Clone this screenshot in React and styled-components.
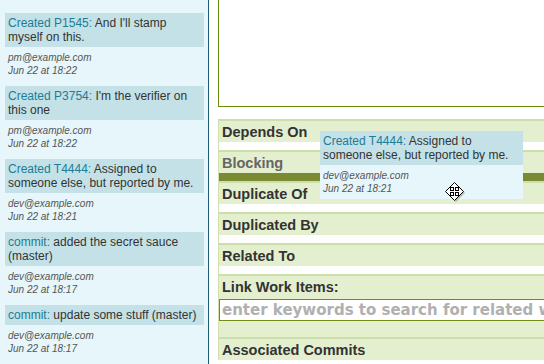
import React from "react";
import styled, { createGlobalStyle } from "styled-components";

const GlobalStyle = createGlobalStyle`
  html, body {
    margin: 0;
    padding: 0;
    background: #ffffff;
  }
  body {
    font-family: "Liberation Sans", Arial, sans-serif;
    color: #333;
  }
`;

const activity = [
  {
    kind: "Created P1545",
    text: "And I'll stamp myself on this.",
    author: "pm@example.com",
    when: "Jun 22 at 18:22",
  },
  {
    kind: "Created P3754",
    text: "I'm the verifier on this one",
    author: "pm@example.com",
    when: "Jun 22 at 18:22",
  },
  {
    kind: "Created T4444",
    text: "Assigned to someone else, but reported by me.",
    author: "dev@example.com",
    when: "Jun 22 at 18:21",
  },
  {
    kind: "commit",
    text: "added the secret sauce (master)",
    author: "dev@example.com",
    when: "Jun 22 at 18:17",
  },
  {
    kind: "commit",
    text: "update some stuff (master)",
    author: "dev@example.com",
    when: "Jun 22 at 18:17",
  },
];

const sections = [
  { title: "Depends On" },
  { title: "Blocking", dim: true, drop: true },
  { title: "Duplicate Of" },
  { title: "Duplicated By" },
  { title: "Related To" },
];

const MoveCursor = () => (
  <CursorBox width="21" height="21" viewBox="0 0 21 21">
    <polygon points="11,2 20,11 11,20 2,11" fill="#9a9a9a" opacity="0.6" />
    <polygon points="9.5,0.5 18.5,9.5 9.5,18.5 0.5,9.5" fill="#fff" stroke="#000" strokeWidth="1" />
    <rect x="5.5" y="5.5" width="3" height="3" fill="#fff" stroke="#000" />
    <rect x="10.5" y="5.5" width="3" height="3" fill="#fff" stroke="#000" />
    <rect x="5.5" y="10.5" width="3" height="3" fill="#fff" stroke="#000" />
    <rect x="10.5" y="10.5" width="3" height="3" fill="#fff" stroke="#000" />
  </CursorBox>
);

const ActivityItem = ({ item, ghost }) => (
  <Item $ghost={ghost}>
    <Summary>
      <Kind>{item.kind}:</Kind> {item.text}
    </Summary>
    <Meta $ghost={ghost}>
      <div>{item.author}</div>
      <div>{item.when}</div>
    </Meta>
  </Item>
);

const App = () => {
  return (
    <>
      <GlobalStyle />
      <Page>
        <Sidebar>
          {activity.map((item, index) => (
            <ActivityItem key={index} item={item} />
          ))}
        </Sidebar>
        <Main>
          <Editor />
          <Sections>
            {sections.map((s) => (
              <Section key={s.title}>
                <SectionHeader $dim={s.dim}>{s.title}</SectionHeader>
                <SectionBody $drop={s.drop} />
              </Section>
            ))}
            <Section>
              <SectionHeader>Link Work Items:</SectionHeader>
              <LinkBody>
                <SearchInput placeholder="enter keywords to search for related work items" />
              </LinkBody>
            </Section>
            <Section>
              <SectionHeader>Associated Commits</SectionHeader>
            </Section>
          </Sections>
        </Main>
        <Ghost>
          <ActivityItem item={activity[2]} ghost />
        </Ghost>
        <MoveCursor />
      </Page>
    </>
  );
};

const Page = styled.div`
  position: relative;
  display: flex;
  width: 544px;
  height: 364px;
  overflow: hidden;
`;

const Sidebar = styled.div`
  width: 199px;
  flex-shrink: 0;
  padding: 13px 4px 0 5px;
  background: #e6f6fb;
  border-right: 1px solid #1f5b6e;
`;

const Item = styled.div`
  margin-bottom: ${(p) => (p.$ghost ? "0" : "8px")};
  background: ${(p) => (p.$ghost ? "#e6f6fb" : "transparent")};
`;

const Summary = styled.div`
  background: #c3e1e6;
  padding: 3px 3px;
  font-size: 12px;
  line-height: 14px;
  color: #333;
`;

const Kind = styled.span`
  color: #1c7d97;
`;

const Meta = styled.div`
  padding: ${(p) => (p.$ghost ? "4px 3px 4px" : "4px 3px 1px")};
  font-size: 10px;
  line-height: 13px;
  font-style: italic;
  color: #555;
`;

const Main = styled.div`
  flex: 1;
  padding-left: 9px;
  overflow: hidden;
`;

const Editor = styled.div`
  width: 400px;
  height: 106px;
  border-left: 1px solid #6a8c0c;
  border-bottom: 1px solid #6a8c0c;
  background: #fff;
`;

const Sections = styled.div`
  margin-top: 12px;
  width: 400px;
  border-left: 1px solid #cfe0ad;
`;

const Section = styled.div``;

const SectionHeader = styled.div`
  height: 21px;
  border-top: 2px solid #cddfa9;
  background: #e4efd0;
  padding-left: 3px;
  font-size: 14.5px;
  font-weight: bold;
  line-height: 22px;
  color: ${(p) => (p.$dim ? "#666" : "#333")};
`;

const SectionBody = styled.div`
  height: 8px;
  background: ${(p) => (p.$drop ? "#7a8a33" : "#fff")};
`;

const LinkBody = styled.div`
  background: #e4efd0;
  padding: 2px 0 16px 0;
`;

const SearchInput = styled.input`
  display: block;
  box-sizing: border-box;
  width: 100%;
  height: 22px;
  margin: 0;
  padding: 0 2px;
  border: 1px solid #6f8f14;
  background: #fff;
  outline: none;
  font-family: "DejaVu Sans", Verdana, sans-serif;
  font-size: 15px;
  font-weight: bold;
  &::placeholder {
    color: #b0b0b0;
  }
`;

const Ghost = styled.div`
  position: absolute;
  left: 320px;
  top: 131px;
  width: 203px;
`;

const CursorBox = styled.svg`
  position: absolute;
  left: 445px;
  top: 182px;
`;

export default App;
